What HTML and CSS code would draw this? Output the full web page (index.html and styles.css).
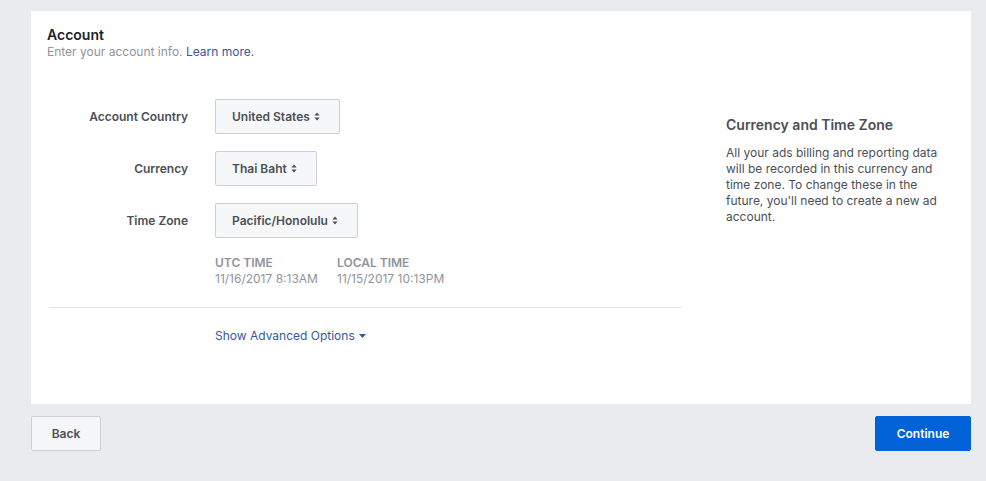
FILE: index.html
```html
<!DOCTYPE html>
<html lang="en">
<head>
<meta charset="utf-8">
<title>Account</title>
<link rel="stylesheet" href="styles.css">
</head>
<body>
<div class="page">
  <div class="card">
    <div class="card-header">
      <div class="title">Account</div>
      <div class="subtitle">Enter your account info. <a class="link" href="#">Learn more.</a></div>
    </div>
    <div class="card-body">
      <div class="form">
        <div class="row">
          <div class="label">Account Country</div>
          <button class="select">United States <svg class="updown" width="6" height="9" viewBox="0 0 6 9"><path d="M3 0.5L5.6 3.6H0.4Z M3 8.5L0.4 5.4H5.6Z" fill="#4b4f56"/></svg></button>
        </div>
        <div class="row">
          <div class="label">Currency</div>
          <button class="select">Thai Baht <svg class="updown" width="6" height="9" viewBox="0 0 6 9"><path d="M3 0.5L5.6 3.6H0.4Z M3 8.5L0.4 5.4H5.6Z" fill="#4b4f56"/></svg></button>
        </div>
        <div class="row">
          <div class="label">Time Zone</div>
          <button class="select">Pacific/Honolulu <svg class="updown" width="6" height="9" viewBox="0 0 6 9"><path d="M3 0.5L5.6 3.6H0.4Z M3 8.5L0.4 5.4H5.6Z" fill="#4b4f56"/></svg></button>
        </div>
        <div class="times">
          <div class="time-col utc">
            <div class="time-label">UTC TIME</div>
            <div class="time-value">11/16/2017 8:13AM</div>
          </div>
          <div class="time-col">
            <div class="time-label">LOCAL TIME</div>
            <div class="time-value">11/15/2017 10:13PM</div>
          </div>
        </div>
        <div class="divider"></div>
        <a class="advanced" href="#">Show Advanced Options <svg class="caret" width="7" height="4" viewBox="0 0 7 4"><path d="M0 0H7L3.5 4Z" fill="#365899"/></svg></a>
      </div>
      <div class="aside">
        <div class="aside-title">Currency and Time Zone</div>
        <p class="aside-text">All your ads billing and reporting data will be recorded in this currency and time zone. To change these in the future, you'll need to create a new ad account.</p>
      </div>
    </div>
  </div>
  <div class="actions">
    <button class="btn btn-back">Back</button>
    <button class="btn btn-continue">Continue</button>
  </div>
</div>
</body>
</html>
```
FILE: styles.css
```css
html, body {
  margin: 0;
  padding: 0;
  background: #e9ebee;
}
body {
  font-family: Inter, "Liberation Sans", Helvetica, Arial, sans-serif;
  color: #1d2129;
}
.page {
  padding: 11px 15px 0 31px;
}
.card {
  background: #fff;
  padding: 0 16px 60px 16px;
}
.card-header {
  padding-top: 15px;
}
.title {
  font-size: 14px;
  font-weight: 600;
  line-height: 18px;
  color: #1d2129;
}
.subtitle {
  font-size: 12px;
  line-height: 16px;
  color: #90949c;
}
.link {
  color: #365899;
  text-decoration: none;
}
.card-body {
  display: flex;
  gap: 44px;
  padding-left: 3px;
}
.form {
  width: 632px;
  padding-top: 39px;
}
.row {
  display: flex;
  align-items: center;
  gap: 27px;
  height: 35px;
  margin-bottom: 17px;
}
.label {
  width: 138px;
  text-align: right;
  font-size: 12px;
  font-weight: 600;
  color: #4b4f56;
}
.select {
  height: 35px;
  box-sizing: border-box;
  border: 1px solid #ccd0d5;
  border-radius: 2px;
  background: #f6f7f9;
  padding: 0 19px 0 16px;
  font-family: inherit;
  font-size: 12px;
  font-weight: 600;
  color: #4b4f56;
  display: flex;
  align-items: center;
  gap: 4px;
}
.times {
  display: flex;
  margin-left: 165px;
  font-size: 12px;
  line-height: 16px;
  color: #90949c;
}
.time-col.utc {
  width: 122px;
}
.time-label {
  font-weight: 600;
}
.divider {
  height: 1px;
  background: #e5e5e5;
  margin-top: 20px;
}
.advanced {
  display: inline-flex;
  align-items: center;
  gap: 4px;
  margin-top: 20px;
  margin-left: 165px;
  font-size: 12px;
  line-height: 16px;
  color: #365899;
  text-decoration: none;
}
.aside {
  width: 215px;
  padding-top: 56px;
}
.aside-title {
  font-size: 14px;
  font-weight: 600;
  line-height: 18px;
  color: #4b4f56;
}
.aside-text {
  margin: 11px 0 0;
  font-size: 12px;
  line-height: 16px;
  color: #4b4f56;
}
.actions {
  display: flex;
  justify-content: space-between;
  margin-top: 12px;
}
.btn {
  height: 35px;
  box-sizing: border-box;
  border-radius: 2px;
  font-family: inherit;
  font-size: 12px;
  font-weight: 600;
}
.btn-back {
  width: 70px;
  border: 1px solid #ccd0d5;
  background: #f5f6f7;
  color: #4b4f56;
}
.btn-continue {
  width: 96px;
  border: 1px solid #0062d6;
  background: #0062d6;
  color: #fff;
}
```
